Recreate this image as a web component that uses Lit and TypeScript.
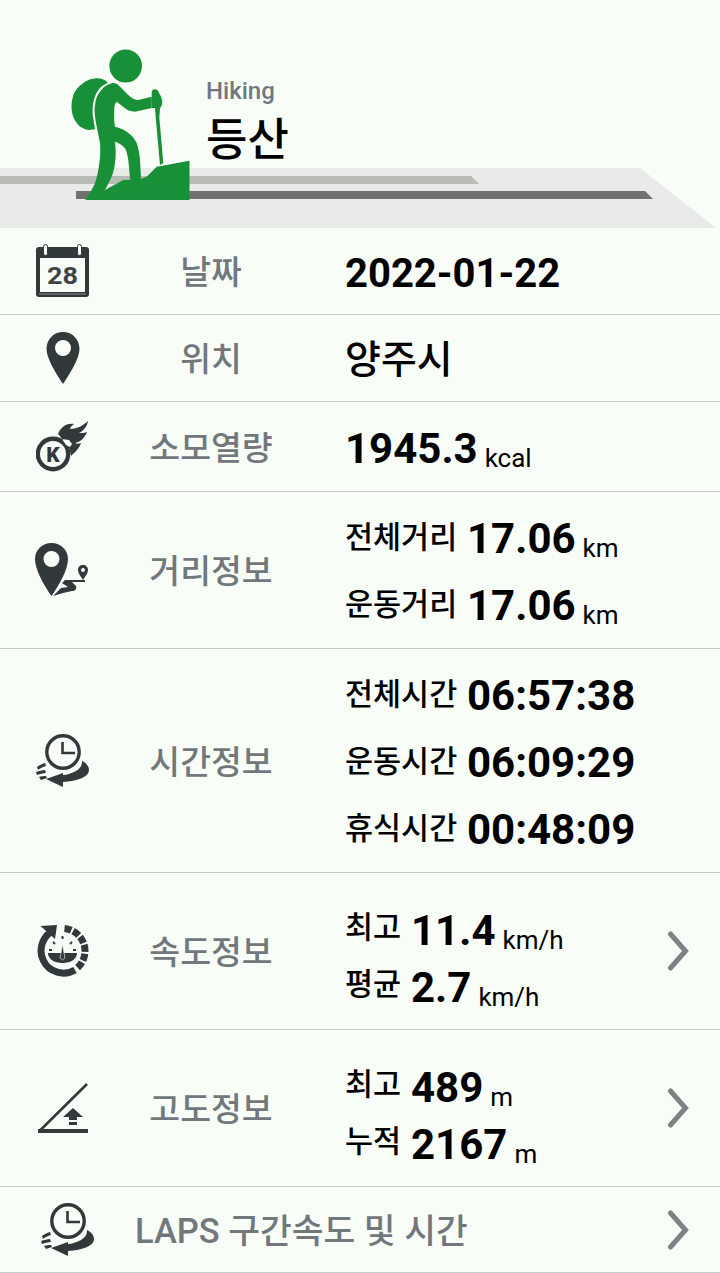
import { LitElement, css, html, svg } from "lit";
import { customElement } from "lit/decorators.js";

const ICON = "#32393a";
const PAPER = "#f8fdf8";
const GREEN = "#189038";

const clockIcon = svg`
  <circle cx="27" cy="18" r="16.2" fill="none" stroke="${ICON}" stroke-width="3.4" />
  <path d="M26.5 8v11H39" fill="none" stroke="${ICON}" stroke-width="2.6" />
  <path d="M27 39L10 45l17 8v-5c15-1 26-5 26-12 0-4-3-7-7-9 0 4-1 7-6 10-4 2-9 4-13 4z" fill="${ICON}" />
  <path d="M1 33c2-2 5-3 8-4l1 3c-3 1-6 2-8 4zM0 38c3-1 6-2 9-2l1 3c-3 0-6 1-9 2zM3 43c2-1 5-1 7-1l1 2-6 2z" fill="${ICON}" />
`;

const icons: Record<string, unknown> = {
  calendar: html`<svg width="54" height="54" viewBox="0 0 54 54">
    <path d="M0 6a3 3 0 0 1 3-3h47a3 3 0 0 1 3 3v44a3 3 0 0 1-3 3H3a3 3 0 0 1-3-3z" fill="${ICON}" />
    <rect x="4" y="14" width="45" height="34" fill="${PAPER}" />
    <rect x="3" y="49.5" width="47" height="1" fill="#8b8f8e" />
    <rect x="7.5" y="0.5" width="4" height="11" rx="2" fill="${PAPER}" stroke="${ICON}" stroke-width="1" />
    <rect x="41.5" y="0.5" width="4" height="11" rx="2" fill="${PAPER}" stroke="${ICON}" stroke-width="1" />
    <text x="26.5" y="40" text-anchor="middle" textLength="31" lengthAdjust="spacingAndGlyphs" class="cal">28</text>
  </svg>`,
  pin: html`<svg width="34" height="54" viewBox="0 0 34 54">
    <path fill-rule="evenodd" d="M17 1c9.5 0 16.5 7.5 16.5 17 0 9-8.5 23-16.5 35C9 41 .5 27 .5 18 .5 8.5 7.5 1 17 1zm0 8a8 8 0 1 0 0 16 8 8 0 0 0 0-16z" fill="${ICON}" />
  </svg>`,
  kcal: html`<svg width="54" height="54" viewBox="0 0 54 54">
    <circle cx="17" cy="34" r="15.2" fill="none" stroke="${ICON}" stroke-width="4.4" />
    <text x="17" y="41.5" text-anchor="middle" class="k">K</text>
    <path d="M22 14c3-8 10-11 16-10-3 2-4 4-4 5 6 0 13-3 18-8-1 6-5 10-9 12 3 0 6 0 8-1-2 6-7 10-12 11 2 1 4 1 6 0-2 6-7 10-10 13-1-6-2-10-5-12-3-4-5-7-8-10z" fill="${ICON}" />
    <path d="M26 19l7 1 3 4-2 3-4-2z" fill="${PAPER}" />
    <path d="M24 16l4 1-1 3z" fill="${ICON}" />
  </svg>`,
  route: html`<svg width="56" height="56" viewBox="0 0 56 56">
    <path fill-rule="evenodd" d="M16.5 1C26 1 33 8 33 17c0 10-8 25-16.5 37C8 42 0 27 0 17 0 8 7 1 16.5 1zm0 8a8 8 0 1 0 0 16 8 8 0 0 0 0-16z" fill="${ICON}" />
    <path d="M18 54l8-8 7-1-6-4 3-3h20v2H37l4 4c1 3-1 5-4 5l-9 2z" fill="${ICON}" />
    <path fill-rule="evenodd" d="M48 23c3 0 5 2 5 5 0 3-3 7-5 10-2-3-5-7-5-10 0-3 2-5 5-5zm0 3a2 2 0 1 0 0 4 2 2 0 0 0 0-4z" fill="${ICON}" />
  </svg>`,
  clock: html`<svg width="54" height="54" viewBox="0 0 54 54">${clockIcon}</svg>`,
  speed: html`<svg width="54" height="54" viewBox="0 0 54 54">
    <path d="M18.8 5.9A22.5 22.5 0 1 0 39 46" fill="none" stroke="${ICON}" stroke-width="7" />
    <path d="M4.5 2L21 1l-2 14z" fill="${ICON}" />
    <path d="M28.5 4.6A22.5 22.5 0 0 1 41.6 43.7" fill="none" stroke="${ICON}" stroke-width="7" stroke-dasharray="7 2" />
    <path d="M12 29h29c0 6-6 10-14.5 10S12 35 12 29z" fill="${ICON}" />
    <path d="M25 29l1.5-9 1.5 9 1 5-2.5 2-2.5-2z" fill="${ICON}" stroke="${PAPER}" stroke-width=".6" />
    <path d="M13 26h3M17 18l2 2M26.5 12v3M36 18l-2 2M40 26h-3" stroke="${ICON}" stroke-width="2" fill="none" />
  </svg>`,
  slope: html`<svg width="52" height="52" viewBox="0 0 52 52">
    <path d="M3 48.5L50 2" fill="none" stroke="${ICON}" stroke-width="2.6" />
    <rect x="1" y="47" width="50" height="4" fill="${ICON}" />
    <path d="M36 26l10 9h-6v3h-8v-3h-6zM32 40h8v3h-8z" fill="${ICON}" />
  </svg>`,
};

const chevron = html`<svg class="chev" width="24" height="40" viewBox="0 0 24 40">
  <path d="M5.5 3l15 17-15 17" fill="none" stroke="#7d8384" stroke-width="5" stroke-linecap="round" />
</svg>`;

type Line = { label?: string; value: string; unit?: string };
type Row = {
  icon: string;
  label: string;
  lines: Line[];
  kind: string;
  arrow?: boolean;
};

const rows: Row[] = [
  { icon: "calendar", label: "날짜", kind: "h87 date", lines: [{ value: "2022-01-22" }] },
  { icon: "pin", label: "위치", kind: "h87 place", lines: [{ value: "양주시" }] },
  { icon: "kcal", label: "소모열량", kind: "h90", lines: [{ value: "1945.3", unit: "kcal" }] },
  {
    icon: "route",
    label: "거리정보",
    kind: "h157 wide",
    lines: [
      { label: "전체거리", value: "17.06", unit: "km" },
      { label: "운동거리", value: "17.06", unit: "km" },
    ],
  },
  {
    icon: "clock",
    label: "시간정보",
    kind: "h224 wide",
    lines: [
      { label: "전체시간", value: "06:57:38" },
      { label: "운동시간", value: "06:09:29" },
      { label: "휴식시간", value: "00:48:09" },
    ],
  },
  {
    icon: "speed",
    label: "속도정보",
    kind: "h157 tight",
    arrow: true,
    lines: [
      { label: "최고", value: "11.4", unit: "km/h" },
      { label: "평균", value: "2.7", unit: "km/h" },
    ],
  },
  {
    icon: "slope",
    label: "고도정보",
    kind: "h157 tight",
    arrow: true,
    lines: [
      { label: "최고", value: "489", unit: "m" },
      { label: "누적", value: "2167", unit: "m" },
    ],
  },
];

@customElement("app-root")
export class AppRoot extends LitElement {
  static styles = css`
    :host {
      display: block;
      width: 720px;
      height: 1273px;
      overflow: hidden;
      background: #f8fdf8;
      color: #000;
      font-family: Roboto, "Noto Sans CJK KR", sans-serif;
    }
    .banner {
      position: relative;
      height: 228px;
      box-sizing: border-box;
      padding: 76px 0 0 206px;
    }
    .scene {
      position: absolute;
      left: 0;
      top: 0;
    }
    .cal {
      font: 700 24px Roboto, sans-serif;
      fill: #3d4445;
    }
    .k {
      font: 900 21px Roboto, sans-serif;
      fill: #32393a;
    }
    .title {
      position: relative;
    }
    .en {
      font-size: 24px;
      line-height: 30px;
      font-weight: 500;
      color: #70787f;
    }
    .ko {
      margin-top: 5px;
      font-size: 45px;
      line-height: 60px;
      font-weight: 500;
    }
    .row {
      display: flex;
      align-items: center;
      box-sizing: border-box;
      border-bottom: 1px solid #c9cdc9;
    }
    .h87 {
      height: 87px;
    }
    .h90 {
      height: 90px;
    }
    .h157 {
      height: 157px;
    }
    .h224 {
      height: 224px;
    }
    .icon {
      width: 125px;
      flex: none;
      display: flex;
      justify-content: center;
      align-items: center;
    }
    .name {
      width: 172px;
      flex: none;
      box-sizing: border-box;
      padding-bottom: 4px;
      text-align: center;
      font-size: 33.5px;
      font-weight: 500;
      color: #71787c;
    }
    .wide .name,
    .tight .name,
    .h90 .name {
      padding-bottom: 3px;
    }
    .values {
      flex: 1;
      padding-left: 48px;
      display: flex;
      flex-direction: column;
    }
    .date .values,
    .h90 .values {
      padding-top: 4px;
    }
    .place .values {
      padding-bottom: 4px;
    }
    .wide .values {
      padding-top: 4px;
    }
    .tight .values {
      padding-top: 15px;
    }
    .line {
      display: flex;
      align-items: baseline;
    }
    .wide .line {
      height: 67px;
      line-height: 67px;
    }
    .tight .line {
      height: 57px;
      line-height: 57px;
    }
    .lab {
      font-size: 30.5px;
      font-weight: 500;
      position: relative;
      top: -5px;
    }
    .wide .lab {
      width: 122px;
    }
    .tight .lab {
      width: 66px;
      top: -7px;
    }
    .val {
      font-size: 42px;
      font-weight: 700;
    }
    .single {
      font-size: 40px;
      font-weight: 700;
    }
    .h90 .single {
      font-size: 42px;
    }
    .place .single {
      font-size: 39px;
      font-weight: 500;
    }
    .unit {
      margin-left: 7px;
      font-size: 26px;
      position: relative;
      top: 4px;
    }
    .chev {
      flex: none;
      margin-right: 31px;
    }
    .laps {
      height: 86px;
    }
    .laps .icon {
      width: 135px;
    }
    .laps .name {
      flex: 1;
      width: auto;
      text-align: left;
      font-size: 34.5px;
    }
  `;

  private renderLine(line: Line) {
    return html`<div class="line">
      ${line.label ? html`<span class="lab">${line.label}</span>` : ""}
      <span class=${line.label ? "val" : "single"}>${line.value}</span>
      ${line.unit ? html`<span class="unit">${line.unit}</span>` : ""}
    </div>`;
  }

  render() {
    return html`
      <div class="banner">
        <svg class="scene" width="720" height="228" viewBox="0 0 720 228">
          <path d="M0 168h640l76 60H0z" fill="#e8ebe7" />
          <path d="M0 176h471l8 8H0z" fill="#b8bbb6" />
          <path d="M76 191h569l8 8H76z" fill="#6f726e" />
          <ellipse cx="125.7" cy="66" rx="16.3" ry="16.5" fill="${GREEN}" />
          <path d="M96 78.3C100 78 104 78.8 108 82.7 103 85 100 87 98.3 90 95 95 94 99 93.3 103 92.5 107 92.5 111 92.7 115L95 129.3 88.3 130C84 129 81 127.5 78.3 125 74 120 72 115 71.7 110 71 105 72 100 73.3 95 75 90 79 86 83.3 83 87 80 92 78.5 96 78.3z" fill="${GREEN}" />
          <path d="M111.7 83.3C115 82.5 117 84 118.3 85L128.3 95C132 98.5 135 100 138.3 100L151.7 96.7V108L135 111.7C130 111.5 127 110 125 108.3L116.7 101.7C114.5 104 114 107 114.3 110 114 117 114 122 115 126.7 120 128 124 129.5 126.7 131.7 132 135.5 135 139 136.7 143 138.5 148 139.5 154 140 160L141 178C141 180.5 138 182 135 181.7 132 181.7 130 180 130 178L128.3 160C127.5 155 126.5 151 125 148.3 122 145 119 143 115 141.7 116 150 116 157 115 163 114.5 168 113 173 111.7 176.7L105 190 85 200C90 193 93 188 95 183.3 97 177 98.5 170 99.3 163.3 100.5 156 100.5 150 100 143.3L96 123C95 115 94 110 95 105 95.5 100 97 95 100 91.7 103 87.5 107 84.5 111.7 83.3z" fill="${GREEN}" />
          <path d="M151.7 91.7C152 88.5 158 88 158.5 92L159.3 93.5C161 96 162 98.5 162.3 101.7 162.5 104.5 161 107 160 108.3L159.3 117.3 163.3 163.3 160 165 155.7 117.3 155 108H151.7z" fill="${GREEN}" />
          <path d="M85 200L105 190 123.3 180 140 179.3 146.7 176.7 156.7 166.7 189.5 160.7V200z" fill="${GREEN}" />
        </svg>
        <div class="title">
          <div class="en">Hiking</div>
          <div class="ko">등산</div>
        </div>
      </div>
      ${rows.map(
        (row) => html`<div class="row ${row.kind}">
          <div class="icon">${icons[row.icon]}</div>
          <div class="name">${row.label}</div>
          <div class="values">${row.lines.map((l) => this.renderLine(l))}</div>
          ${row.arrow ? chevron : ""}
        </div>`,
      )}
      <div class="row laps">
        <div class="icon">${icons.clock}</div>
        <div class="name">LAPS 구간속도 및 시간</div>
        ${chevron}
      </div>
    `;
  }
}
